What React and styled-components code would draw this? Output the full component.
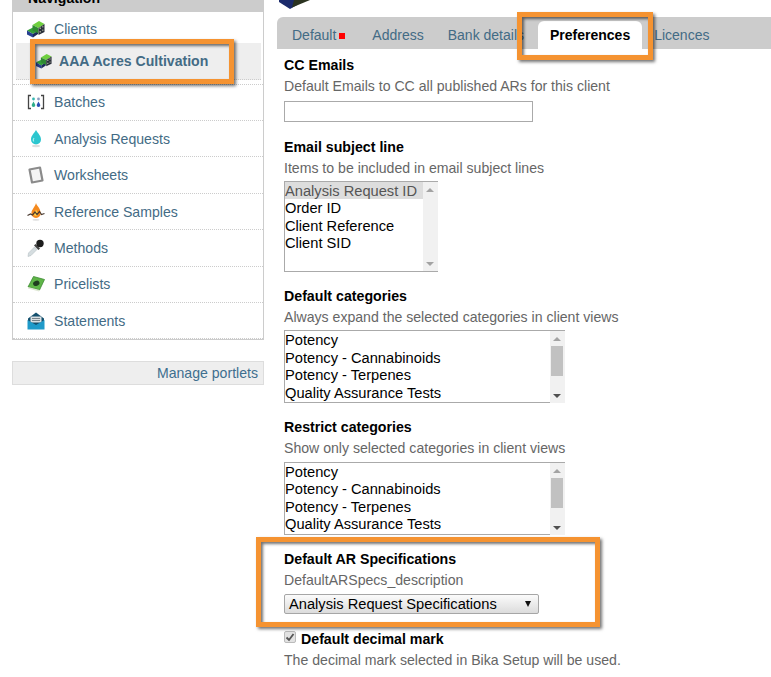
import React from 'react'
import styled, { createGlobalStyle } from 'styled-components'

const GlobalStyle = createGlobalStyle`
  html, body {
    margin: 0;
    padding: 0;
    background: #fff;
    overflow: hidden;
  }
  body {
    font-family: "Liberation Sans", Arial, sans-serif;
    font-size: 14.1px;
    color: #000;
  }
`

const Page = styled.div`
  position: relative;
  width: 771px;
  height: 677px;
  overflow: hidden;
  display: flex;
  align-items: flex-start;
  padding-left: 12px;
  box-sizing: border-box;
`

const Sidebar = styled.aside`
  width: 252px;
  flex-shrink: 0;
  margin: -4px 13px 0 0;
`

const PortletHeader = styled.div`
  height: 16px;
  background: #ccc;
  padding-left: 16px;
  font-weight: bold;
  line-height: 4px;
`

const Portlet = styled.nav`
  border: 1px solid #ccc;
  border-top: none;
  margin-bottom: 20.3px;
`

const NavRow = styled.a`
  display: flex;
  align-items: center;
  height: 36.4px;
  padding-left: 14px;
  gap: 9px;
  color: #436b85;
  box-sizing: border-box;
  border-bottom: 1px dotted #ccc;
`

const ClientsGroup = styled.div`
  height: 72.7px;
  box-sizing: border-box;
  border-bottom: 1px dotted #ccc;
`

const ClientsRow = styled(NavRow)`
  height: 31px;
  padding-top: 3px;
  border-bottom: none;
`

const ActiveRow = styled.a`
  display: flex;
  align-items: center;
  margin: 0 2px 0 3px;
  height: 37px;
  box-sizing: border-box;
  padding-left: 20px;
  gap: 7px;
  background: #eee;
  border-bottom: 1px dotted #ccc;
  color: #436b85;
  font-weight: bold;
`

const ManageBar = styled.div`
  height: 24px;
  background: #eee;
  border: 1px solid #ddd;
  box-sizing: border-box;
  text-align: right;
  padding-right: 5px;
  line-height: 22px;
  color: #3f6f8f;
`

const Main = styled.main`
  flex: 1;
  min-width: 0;
`

const TitleIcon = styled.div`
  height: 17px;
  overflow: hidden;
`

const TabBar = styled.div`
  display: flex;
  align-items: flex-end;
  height: 32px;
  padding-left: 3px;
  background: #ccc;
  border-radius: 6px 0 0 0;
`

const Tab = styled.a`
  display: flex;
  align-items: center;
  height: 28px;
  padding: 0 12px 1px;
  box-sizing: border-box;
  margin-right: ${(p) => p.$gap || 0}px;
  border-radius: 6px 6px 0 0;
  font-size: 14px;
  color: ${(p) => (p.$active ? '#000' : '#436b85')};
  background: ${(p) => (p.$active ? '#fff' : 'transparent')};
  font-weight: ${(p) => (p.$active ? 'bold' : 'normal')};
  white-space: nowrap;
`

const RedMark = styled.span`
  width: 6px;
  height: 6px;
  margin: 3px 0 0 3px;
  background: #f00;
`

const Form = styled.div`
  padding: 6px 0 0 7px;
`

const Field = styled.div`
  margin-bottom: ${(p) => p.$after ?? 13.5}px;
`

const Label = styled.div`
  font-weight: bold;
  font-size: 14.2px;
  line-height: 21px;
`

const Help = styled.div`
  color: #666;
  line-height: 21px;
  margin-bottom: ${(p) => p.$after ?? 3}px;
`

const TextInput = styled.input`
  display: block;
  width: 249px;
  height: 21px;
  padding: 0;
  box-sizing: border-box;
  border: 1px solid #aaa;
  background: #fff;
`

const ListBox = styled.div`
  display: flex;
  width: ${(p) => p.$w}px;
  height: ${(p) => p.$h}px;
  box-sizing: border-box;
  border: 1px solid #aaa;
  border-right: none;
  font-size: 14.67px;
`

const Options = styled.div`
  flex: 1;
  min-width: 0;
`

const Option = styled.div`
  height: 17.6px;
  line-height: 18px;
  white-space: nowrap;
  color: ${(p) => (p.$selected ? '#555' : '#000')};
  background: ${(p) => (p.$selected ? '#ddd' : 'transparent')};
`

const ScrollBar = styled.div`
  position: relative;
  width: 15px;
  flex-shrink: 0;
  margin-bottom: ${(p) => (p.$overBorder ? -1 : 0)}px;
  background: #f1f1f1;
`

const ScrollArrow = styled.span`
  position: absolute;
  left: 3px;
  ${(p) => (p.$down ? 'bottom: 5px;' : 'top: 6px;')}
  border-left: 4px solid transparent;
  border-right: 4px solid transparent;
  ${(p) =>
    p.$down
      ? `border-top: 4px solid ${p.$dim ? '#a3a3a3' : '#505050'};`
      : 'border-bottom: 4px solid #a3a3a3;'}
`

const ScrollThumb = styled.span`
  position: absolute;
  left: 1px;
  right: 2px;
  top: 15px;
  height: 30px;
  background: #c1c1c1;
`

const DropDown = styled.div`
  display: flex;
  align-items: center;
  justify-content: space-between;
  width: 255px;
  height: 20px;
  box-sizing: border-box;
  padding: 0 7px 0 4px;
  border: 1px solid #a6a6a6;
  border-radius: 2px;
  background: linear-gradient(#fbfbfb, #dcdcdc);
  font-size: 14.67px;
`

const DropArrow = styled.span`
  border-left: 3.5px solid transparent;
  border-right: 3.5px solid transparent;
  border-top: 6px solid #111;
`

const CheckRow = styled.div`
  display: flex;
  align-items: center;
  gap: 5px;
  height: 21px;
`

const CheckBox = styled.span`
  display: flex;
  align-items: center;
  justify-content: center;
  width: 12px;
  height: 12px;
  margin-top: -4px;
  box-sizing: border-box;
  border: 1px solid #bbb;
  border-radius: 2px;
  background: #e2e2e2;
`

const Annotation = styled.div`
  position: absolute;
  left: ${(p) => p.$x}px;
  top: ${(p) => p.$y}px;
  width: ${(p) => p.$w}px;
  height: ${(p) => p.$h}px;
  box-sizing: border-box;
  border: 5px solid #f59331;
  box-shadow: 2px 2px 3px rgba(0, 0, 0, 0.55), inset 2px 2px 3px rgba(0, 0, 0, 0.55);
  pointer-events: none;
`

const Icon = styled.svg`
  width: ${(p) => p.$size || 18}px;
  height: ${(p) => p.$size || 18}px;
  flex-shrink: 0;
`

function BlocksIcon({ size }) {
  return (
    <Icon $size={size} viewBox="0 0 18 18">
      <path d="M0 10.500l6-3 5 3-5 3.500z" fill="#33a038" />
      <path d="M0 10.500l6 3.500v3.500l-6-3z" fill="#27408f" />
      <path d="M6 14l5-3.500v3.500l-5 3.500z" fill="#1b2a5a" />
      <path d="M5.500 5l6.500-4 5.500 3-6 4z" fill="#6fcf3f" />
      <path d="M5.500 5l6 3v5.500l-6-3z" fill="#2e8a32" />
      <path d="M11.500 8l6-4v8l-6 3z" fill="#2a2f3a" />
      <path d="M12.500 7.500h1.500V9h-1.500zM15.200 6h1.200v1.500h-1.200zM12.500 11h1.500v1.500h-1.500zM15.200 9.500h1.200V11h-1.200z" fill="#9aa090" />
    </Icon>
  )
}

function BatchesIcon() {
  return (
    <Icon viewBox="0 0 18 18">
      <path d="M4 2.500H1.500v13H4M14 2.500h2.500v13H14" fill="none" stroke="#444" strokeWidth="1.300" />
      <circle cx="6.500" cy="6" r="1.400" fill="#36b6b0" />
      <circle cx="11.500" cy="6" r="1.400" fill="#8a9cc0" />
      <path d="M6.500 8.500c1.300 2.200 1.800 3 1.800 3.800a1.800 1.800 0 0 1-3.600 0c0-.8.500-1.600 1.800-3.800z" fill="#2fae8a" />
      <path d="M11.500 8.500c1.300 2.200 1.800 3 1.800 3.800a1.800 1.800 0 0 1-3.600 0c0-.8.500-1.600 1.800-3.800z" fill="#2c4fb5" />
    </Icon>
  )
}

function DropIcon() {
  return (
    <Icon viewBox="0 0 18 18">
      <path d="M9 0c2.500 4 5 6 5 9.500a5 5 0 0 1-10 0C4 6 6.500 4 9 0z" fill="#2cc6cf" />
      <path d="M7 8c-.8 1-1 2.500-.2 3.500" stroke="#a9eef0" strokeWidth="1.200" fill="none" />
      <ellipse cx="9" cy="16" rx="4" ry="1.200" fill="#ddd" />
    </Icon>
  )
}

function SheetIcon() {
  return (
    <Icon viewBox="0 0 18 18">
      <path d="M2.500 3.500l10.500-2 2.500 13L5 16.500z" fill="#f4f4f4" stroke="#8b8b8b" strokeWidth="2.200" strokeLinejoin="round" />
    </Icon>
  )
}

function FlameIcon() {
  return (
    <Icon viewBox="0 0 18 18">
      <path d="M9 0c.5 2.500 4.500 5 4.500 9.500A4.500 4.500 0 0 1 9 15a4.500 4.500 0 0 1-4.500-5.500C4.500 7 8 4 9 0z" fill="#f58a1f" />
      <path d="M9 6.500c.3 1.500 2 2.500 2 4.500a2 2 0 0 1-4 0c0-1.500 1.500-2.500 2-4.500z" fill="#fbd04a" />
      <path d="M0.500 12.500l3-1.500 2 1 2.500-3 2 2.500 2.500-3 2 3 3-1" fill="none" stroke="#4a3a30" strokeWidth="1.200" />
      <ellipse cx="9" cy="16.800" rx="3.500" ry="0.900" fill="#ddd" />
    </Icon>
  )
}

function DropperIcon() {
  return (
    <Icon viewBox="0 0 18 18">
      <path d="M1 17.500l.5-3.500 6-6 2.500 2.500-6 6z" fill="#d5dde0" stroke="#b5bfc4" strokeWidth="0.600" />
      <path d="M7 6.500l4.500 4.500 1.500-1.500-4.500-4.500z" fill="#444" />
      <circle cx="13" cy="4.500" r="3.700" fill="#1d1d1d" />
    </Icon>
  )
}

function BookIcon() {
  return (
    <Icon viewBox="0 0 18 18">
      <path d="M6.500 1.500l11 3-5 10.500-11.500-3z" fill="#5fb548" stroke="#3d8a33" strokeWidth="0.800" />
      <path d="M1 12l11.500 3-.5 1.500L1 13.500z" fill="#dfe8d5" />
      <ellipse cx="9.300" cy="8.300" rx="3.300" ry="2.500" fill="#1f3d1f" transform="rotate(-20 9.300 8.300)" />
    </Icon>
  )
}

function EnvelopeIcon() {
  return (
    <Icon viewBox="0 0 18 18">
      <path d="M9 .500L1 6.500v10.500h16V6.500z" fill="#14506e" />
      <path d="M3.500 4.500h11v6h-11z" fill="#d9dfe2" />
      <path d="M5 6h8v1H5zM5 8h8v1H5z" fill="#77838a" />
      <path d="M.500 8l8.500 5 8.500-5v9.500H.500z" fill="#1f9ac9" />
    </Icon>
  )
}

function TitleBlocks() {
  return (
    <svg width="34" height="17" viewBox="0 0 34 17">
      <path d="M2 0v2l11 7 7-4 2-5z" fill="#1b2a6b" />
      <path d="M15 7.500L33 0H17z" fill="#2b3320" />
    </svg>
  )
}

const subjectItems = ['Analysis Request ID', 'Order ID', 'Client Reference', 'Client SID']
const categoryItems = ['Potency', 'Potency - Cannabinoids', 'Potency - Terpenes', 'Quality Assurance Tests']

const navItems = [
  { label: 'Batches', icon: BatchesIcon },
  { label: 'Analysis Requests', icon: DropIcon },
  { label: 'Worksheets', icon: SheetIcon },
  { label: 'Reference Samples', icon: FlameIcon },
  { label: 'Methods', icon: DropperIcon },
  { label: 'Pricelists', icon: BookIcon },
  { label: 'Statements', icon: EnvelopeIcon },
]

function CategoryList() {
  return (
    <ListBox $w={281} $h={73}>
      <Options>
        {categoryItems.map((item) => (
          <Option key={item}>{item}</Option>
        ))}
      </Options>
      <ScrollBar $overBorder>
        <ScrollArrow />
        <ScrollThumb />
        <ScrollArrow $down />
      </ScrollBar>
    </ListBox>
  )
}

export default function App() {
  return (
    <Page>
      <GlobalStyle />
      <Sidebar>
        <PortletHeader>Navigation</PortletHeader>
        <Portlet>
          <ClientsGroup>
            <ClientsRow>
              <BlocksIcon />
              Clients
            </ClientsRow>
            <ActiveRow>
              <BlocksIcon size={16} />
              AAA Acres Cultivation
            </ActiveRow>
          </ClientsGroup>
          {navItems.map(({ label, icon: ItemIcon }) => (
            <NavRow key={label}>
              <ItemIcon />
              {label}
            </NavRow>
          ))}
        </Portlet>
        <ManageBar>Manage portlets</ManageBar>
      </Sidebar>
      <Main>
        <TitleIcon>
          <TitleBlocks />
        </TitleIcon>
        <TabBar>
          <Tab $gap={3}>
            Default
            <RedMark />
          </Tab>
          <Tab>Address</Tab>
          <Tab $gap={2}>Bank details</Tab>
          <Tab $active>Preferences</Tab>
          <Tab>Licences</Tab>
        </TabBar>
        <Form>
          <Field $after={14.625}>
            <Label>CC Emails</Label>
            <Help $after={4}>Default Emails to CC all published ARs for this client</Help>
            <TextInput type="text" />
          </Field>
          <Field $after={14}>
            <Label>Email subject line</Label>
            <Help $after={1.875}>Items to be included in email subject lines</Help>
            <ListBox $w={154} $h={91}>
              <Options>
                {subjectItems.map((item, i) => (
                  <Option key={item} $selected={i === 0}>
                    {item}
                  </Option>
                ))}
              </Options>
              <ScrollBar>
                <ScrollArrow />
                <ScrollArrow $down $dim />
              </ScrollBar>
            </ListBox>
          </Field>
          <Field>
            <Label>Default categories</Label>
            <Help $after={2.5}>Always expand the selected categories in client views</Help>
            <CategoryList />
          </Field>
          <Field $after={14.5}>
            <Label>Restrict categories</Label>
            <Help>Show only selected categories in client views</Help>
            <CategoryList />
          </Field>
          <Field $after={14.5}>
            <Label>Default AR Specifications</Label>
            <Help>DefaultARSpecs_description</Help>
            <DropDown>
              Analysis Request Specifications
              <DropArrow />
            </DropDown>
          </Field>
          <CheckRow>
            <CheckBox>
              <svg width="10" height="10" viewBox="0 0 10 10">
                <path d="M1.500 5.500l2.500 2.500 4.500-6" fill="none" stroke="#555" strokeWidth="1.800" />
              </svg>
            </CheckBox>
            <Label>Default decimal mark</Label>
          </CheckRow>
          <Help>The decimal mark selected in Bika Setup will be used.</Help>
        </Form>
      </Main>
      <Annotation $x={30} $y={39} $w={204} $h={45} />
      <Annotation $x={517} $y={12} $w={136} $h={48} />
      <Annotation $x={256} $y={537} $w={344} $h={90} />
    </Page>
  )
}
